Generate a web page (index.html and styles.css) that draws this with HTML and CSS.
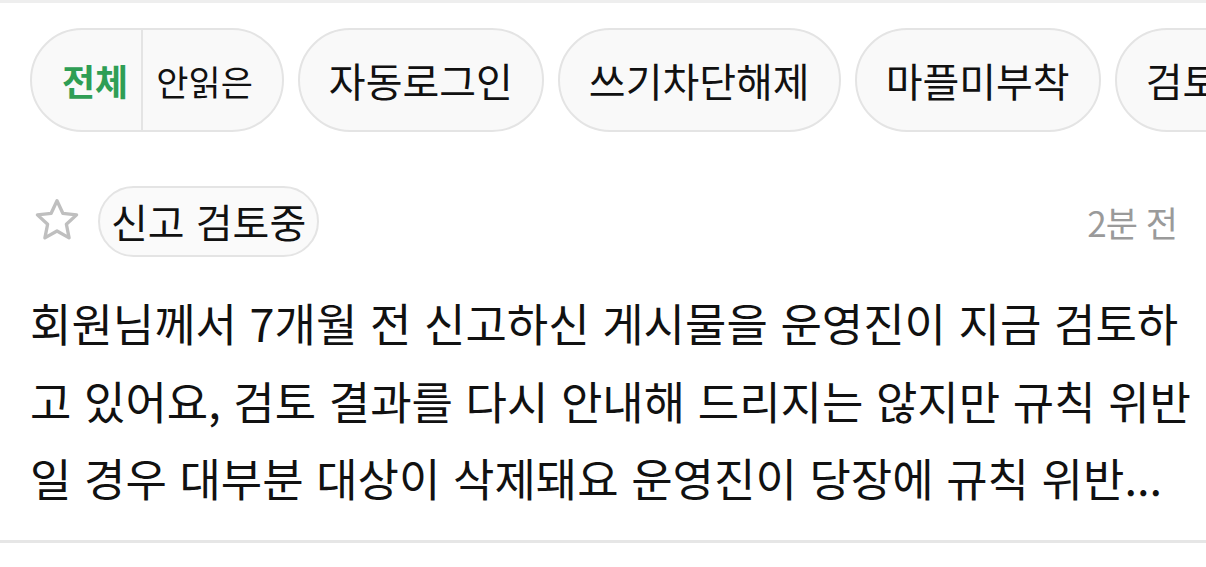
FILE: index.html
```html
<!DOCTYPE html>
<html lang="ko">
<head>
<meta charset="utf-8">
<link rel="stylesheet" href="styles.css">
</head>
<body>
<div class="page">
  <nav class="chips">
    <div class="chip chip-split">
      <span class="seg seg-active">전체</span>
      <span class="seg seg-second">안읽은</span>
    </div>
    <div class="chip">자동로그인</div>
    <div class="chip">쓰기차단해제</div>
    <div class="chip">마플미부착</div>
    <div class="chip">검토중</div>
  </nav>
  <article class="item">
    <header class="item-head">
      <svg class="star" viewBox="0 0 48 48" width="50" height="50" aria-hidden="true">
        <path d="M24 4.5 L29.6 16.6 L42.8 18.1 L33 27.1 L35.6 40.2 L24 33.6 L12.4 40.2 L15 27.1 L5.2 18.1 L18.4 16.6 Z" fill="none" stroke="#bfbfbf" stroke-width="3.2" stroke-linejoin="round"/>
      </svg>
      <span class="badge">신고 검토중</span>
      <span class="time">2분 전</span>
    </header>
    <p class="body">회원님께서 7개월 전 신고하신 게시물을 운영진이 지금 검토하고 있어요, 검토 결과를 다시 안내해 드리지는 않지만 규칙 위반일 경우 대부분 대상이 삭제돼요 운영진이 당장에 규칙 위반...</p>
  </article>
</div>
</body>
</html>
```
FILE: styles.css
```css
html, body {
  margin: 0;
  padding: 0;
  background: #ffffff;
}
body {
  font-family: "Noto Sans CJK KR", "Noto Sans", sans-serif;
  color: #111111;
  width: 1206px;
  height: 567px;
  overflow: hidden;
}
.page {
  border-top: 3px solid #eeeeee;
}
.chips {
  display: flex;
  gap: 14px;
  padding: 25px 0 0 30px;
  white-space: nowrap;
  overflow: hidden;
}
.chip {
  flex: none;
  display: flex;
  align-items: center;
  height: 100px;
  padding: 0 29px;
  border: 2px solid #e4e4e4;
  border-radius: 52px;
  background: #f9f9f9;
  font-size: 40px;
  color: #111111;
}
.chip-split {
  padding: 0;
  font-size: 35px;
}
.seg {
  display: flex;
  align-items: center;
  height: 100%;
}
.seg-active {
  padding: 0 13px 0 30px;
  color: #2f9e55;
  font-weight: 700;
  font-size: 36px;
  border-right: 2px solid #e4e4e4;
}
.seg-second {
  padding: 0 29px 0 13px;
}
.item {
  padding: 0 12px 23px 30px;
  border-bottom: 3px solid #e6e6e6;
}
.item-head {
  display: flex;
  align-items: center;
  margin-top: 53px;
  height: 72px;
  padding-right: 17px;
}
.star {
  flex: none;
  margin-left: 2px;
  margin-right: 16px;
}
.badge {
  display: flex;
  align-items: center;
  height: 67px;
  padding: 0 11px;
  border: 2px solid #e4e4e4;
  border-radius: 36px;
  background: #fafafa;
  font-size: 40px;
  color: #111111;
}
.time {
  margin-left: auto;
  font-size: 35px;
  color: #9a9a9a;
  letter-spacing: -1px;
}
.body {
  margin: 27px 0 0 0;
  font-size: 45px;
  line-height: 77.5px;
  color: #111111;
  display: -webkit-box;
  -webkit-line-clamp: 3;
  -webkit-box-orient: vertical;
  overflow: hidden;
  word-break: break-all;
}
```
